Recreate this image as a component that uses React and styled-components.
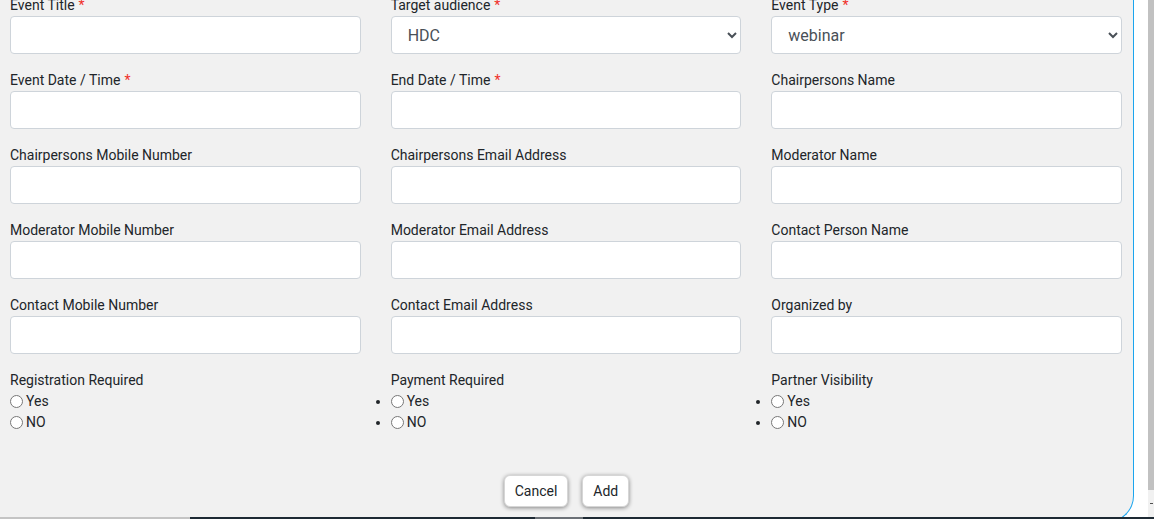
import React from 'react'
import styled, { createGlobalStyle } from 'styled-components'

const GlobalStyle = createGlobalStyle`
  html, body {
    margin: 0;
    padding: 0;
    background: #ffffff;
    overflow: hidden;
  }
  body {
    font-family: Roboto, 'Liberation Sans', sans-serif;
    font-size: 14px;
    color: #212529;
  }
  * { box-sizing: border-box; }
`

const fields = [
  { label: 'Event Title', required: true },
  { label: 'Target audience', required: true, select: 'HDC' },
  { label: 'Event Type', required: true, select: 'webinar' },
  { label: 'Event Date / Time', required: true },
  { label: 'End Date / Time', required: true },
  { label: 'Chairpersons Name' },
  { label: 'Chairpersons Mobile Number' },
  { label: 'Chairpersons Email Address' },
  { label: 'Moderator Name' },
  { label: 'Moderator Mobile Number' },
  { label: 'Moderator Email Address' },
  { label: 'Contact Person Name' },
  { label: 'Contact Mobile Number' },
  { label: 'Contact Email Address' },
  { label: 'Organized by' },
]

const radios = [
  { label: 'Registration Required', name: 'reg', bullets: false },
  { label: 'Payment Required', name: 'pay', bullets: true },
  { label: 'Partner Visibility', name: 'partner', bullets: true },
]

function App() {
  return (
    <Screen>
      <GlobalStyle />
      <Main>
        <Panel>
          <FormGrid>
            {fields.map((f) => (
              <Field key={f.label}>
                <Label>
                  {f.label}
                  {f.required && <Star>*</Star>}
                </Label>
                {f.select ? (
                  <Select defaultValue={f.select}>
                    <option>{f.select}</option>
                  </Select>
                ) : (
                  <Input type='text' />
                )}
              </Field>
            ))}
            {radios.map((r) => (
              <Field key={r.name}>
                <Label>{r.label}</Label>
                <RadioList bullets={r.bullets}>
                  <li>
                    <RadioLabel>
                      <Radio type='radio' name={r.name} />
                      Yes
                    </RadioLabel>
                  </li>
                  <li>
                    <RadioLabel>
                      <Radio type='radio' name={r.name} />
                      NO
                    </RadioLabel>
                  </li>
                </RadioList>
              </Field>
            ))}
          </FormGrid>
          <Actions>
            <Button>Cancel</Button>
            <Button>Add</Button>
          </Actions>
        </Panel>
        <Side>
          <ScrollThumb />
          <ScrollArrow />
        </Side>
      </Main>
      <BottomBar>
        <BarLight />
        <BarDark />
        <BarMid />
        <BarDark grow />
      </BottomBar>
    </Screen>
  )
}

const Screen = styled.div`
  width: 1154px;
  height: 519px;
  display: flex;
  flex-direction: column;
  overflow: hidden;
`

const Main = styled.div`
  display: flex;
  height: 517px;
`

const Panel = styled.div`
  width: 1134px;
  height: 527px;
  margin-top: -5px;
  background: #f1f1f1;
  border-right: 1px solid #1ba5ee;
  border-bottom: 1px solid #1ba5ee;
  border-bottom-right-radius: 26px;
  display: flex;
  flex-direction: column;
  flex-shrink: 0;
`

const FormGrid = styled.div`
  display: grid;
  grid-template-columns: repeat(3, 1fr);
  column-gap: 30px;
  padding: 0 11px 0 10px;
`

const Field = styled.div`
  display: flex;
  flex-direction: column;
  margin-bottom: 16px;
`

const Label = styled.label`
  font-size: 14px;
  line-height: 21px;
  color: #212529;
`

const Star = styled.span`
  color: #f0302a;
  margin-left: 4px;
`

const Input = styled.input`
  height: 38px;
  width: 100%;
  background: #ffffff;
  border: 1px solid #ced4da;
  border-radius: 4px;
  padding: 6px 12px;
  font-family: Roboto, 'Liberation Sans', sans-serif;
  font-size: 16px;
  outline: none;
`

const Select = styled.select`
  height: 38px;
  width: 100%;
  background: #ffffff;
  border: 1px solid #ced4da;
  border-radius: 4px;
  padding: 0 3px 0 12px;
  font-family: Roboto, 'Liberation Sans', sans-serif;
  font-size: 16px;
  color: #495057;
  outline: none;
`

const RadioList = styled.ul`
  margin: 0;
  padding: 0;
  list-style: ${(p) => (p.bullets ? 'disc outside' : 'none')};

  li {
    height: 21px;
    line-height: 21px;
  }
`

const RadioLabel = styled.label`
  display: inline-block;
  font-size: 14px;
  line-height: 21px;
  color: #212529;
`

const Radio = styled.input`
  width: 13px;
  height: 13px;
  margin: 0 3px 0 0;
  vertical-align: -2px;
`

const Actions = styled.div`
  margin-top: auto;
  padding-bottom: 14px;
  display: flex;
  justify-content: center;
  gap: 14px;
`

const Button = styled.button`
  height: 32px;
  padding: 0 10px;
  background: #ffffff;
  border: 1px solid #d6d6d6;
  border-radius: 6px;
  box-shadow: 0 1px 4px rgba(0, 0, 0, 0.45);
  font-family: Roboto, 'Liberation Sans', sans-serif;
  font-size: 14px;
  color: #212529;
  cursor: pointer;
`

const Side = styled.div`
  flex: 1;
  background: #ffffff;
  display: flex;
  flex-direction: column;
  align-items: flex-end;
`

const ScrollThumb = styled.div`
  width: 6px;
  height: 490px;
  background: #c1c1c1;
`

const ScrollArrow = styled.div`
  width: 6px;
  flex: 1;
  background: #f1f1f1;
  display: flex;
  align-items: center;
  justify-content: center;
  &::after {
    content: '';
    width: 3px;
    height: 1px;
    background: #505050;
  }
`

const BottomBar = styled.div`
  display: flex;
  height: 2px;
`

const BarLight = styled.div`
  width: 190px;
  background: #c4c4c4;
`

const BarDark = styled.div`
  width: ${(p) => (p.grow ? 'auto' : '345px')};
  flex: ${(p) => (p.grow ? 1 : 'none')};
  background: #1e2a34;
`

const BarMid = styled.div`
  width: 48px;
  background: #6c7177;
`

export default App
